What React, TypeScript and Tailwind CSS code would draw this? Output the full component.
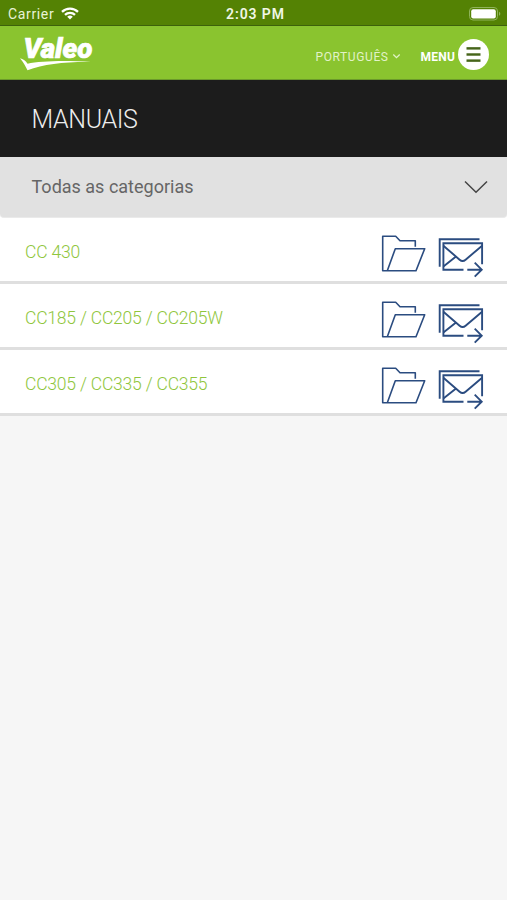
import { Menu } from 'lucide-react';

const manuals = ['CC 430', 'CC185 / CC205 / CC205W', 'CC305 / CC335 / CC355'];

function StatusBar() {
  return (
    <div className="grid h-[26px] grid-cols-3 items-center border-b border-[#3d620b] bg-[#548204] pt-0.5 text-white">
      <div className="flex items-center gap-[7px] pl-2">
        <span className="text-[14px] leading-4 tracking-[0.65px] text-[#e8f3d6]">Carrier</span>
        <svg width="18" height="13" viewBox="0 0 18 13" fill="none" stroke="#fff" strokeWidth="2.3">
          <path d="M1 4.8a11.5 11.5 0 0 1 16 0" />
          <path d="M4 7.9a7.1 7.1 0 0 1 10 0" />
          <path d="M9 12.6 6.2 9.8a4 4 0 0 1 5.6 0Z" fill="#fff" stroke="none" />
        </svg>
      </div>
      <span className="pl-1 text-center text-[14px] leading-4 font-semibold tracking-[0.9px] text-[#f0f7e4]">2:03 PM</span>
      <div className="flex justify-end pr-[6px]">
        <svg width="32" height="14" viewBox="0 0 32 14">
          <rect x="0.5" y="0.5" width="28" height="12.5" rx="3.5" fill="none" stroke="#8fb35a" />
          <rect x="2.2" y="2.2" width="24.6" height="9.2" rx="2" fill="#fff" />
          <path d="M30 4.8v4c1.8-.6 1.8-3.4 0-4Z" fill="#8fb35a" />
        </svg>
      </div>
    </div>
  );
}

function Logo() {
  return (
    <svg className="overflow-visible" width="80" height="36" viewBox="0 0 80 36" fill="#fff">
      <text
        x="3.5"
        y="22.3"
        textLength="69"
        lengthAdjust="spacingAndGlyphs"
        className="font-[Roboto,sans-serif] text-[28px] font-black italic"
        stroke="#fff"
        strokeWidth="0.7"
      >
        Valeo
      </text>
      <path d="M0 22.3c3 .6 5.3 2.2 7.6 5.4C20 25 46 24.300 71 26c-26-.3-47 1.800-63.500 8.300C5.600 30.200 3 26 0 22.300Z" />
    </svg>
  );
}

function Header() {
  return (
    <header className="flex h-[54px] items-center border-b border-[#6b9a2b] bg-[#8ac42f] pt-[3px] pr-[18px] pl-5 text-white">
      <Logo />
      <div className="ml-auto flex items-center">
        <span className="mt-[5px] text-[12px] leading-4 tracking-[0.6px] text-[#e2f2c8]">PORTUGUÊS</span>
        <svg className="mt-[5px] ml-[3px]" width="9" height="7" viewBox="0 0 9 7" fill="none" stroke="#e2f2c8" strokeWidth="1.3">
          <path d="m1.3 1.5 3.2 3.2 3.2-3.2" />
        </svg>
        <span className="mt-[5px] ml-5 text-[12px] leading-4 font-bold tracking-[0.2px]">MENU</span>
        <button className="ml-[3px] flex size-[31px] items-center justify-center rounded-full bg-white text-[#46651a]">
          <Menu className="size-[21px]" strokeWidth={2.8} strokeLinecap="butt" />
        </button>
      </div>
    </header>
  );
}

function FolderIcon() {
  return (
    <svg width="48" height="44" viewBox="0 0 48 44" fill="none" stroke="#2b4c80" strokeWidth="1.6" strokeLinejoin="round">
      <path d="M35.3 12.8V6.7H20l-4.3-4.4h-13v34.4H36l8.7-22H15.3l-8 22" />
    </svg>
  );
}

function MailIcon() {
  return (
    <svg width="48" height="44" viewBox="0 0 48 44" fill="none" stroke="#2b4c80" strokeWidth="1.9">
      <path d="M2.7 32.7V5.3h39.8" />
      <path d="M26.5 35.7H6.4V9.3h38.7v21" />
      <path d="m6.4 11.7 16.2 14q3 2.6 6 0l16.5-14M6.4 32.5l12.3-9.7" />
      <path d="M30.3 35.7h14M37.7 28.7l7 7-7 7" />
    </svg>
  );
}

export default function App() {
  return (
    <div className="min-h-screen bg-[#f6f6f6] font-[Roboto,sans-serif]">
      <StatusBar />
      <Header />

      <div className="flex h-[77px] items-center bg-[#1c1c1c] pt-[3px] pl-[31.5px]">
        <h1 className="text-[25px] leading-8 font-light tracking-[-0.35px] text-[#ededed]">MANUAIS</h1>
      </div>

      <div className="bg-white">
        <div className="flex h-[61px] items-center justify-between rounded-b-[4px] border-b border-[#eaeaea] bg-[#e1e1e1] pr-[18px] pb-px pl-[31.5px]">
          <span className="text-[18px] leading-6 text-[#666]">Todas as categorias</span>
          <svg width="26" height="16" viewBox="0 0 26 16" fill="none" stroke="#444" strokeWidth="1.5">
            <path d="m2 2.5 11 10.7 11-10.7" />
          </svg>
        </div>

        <ul>
          {manuals.map((name) => (
            <li key={name} className="flex h-[66px] items-center justify-between border-b-[3px] border-[#dfdfdf] pr-[22px] pl-[25px]">
              <span className="pt-[5px] text-[17.5px] leading-6 font-light tracking-[-0.2px] text-[#8fc63d]">{name}</span>
              <div className="flex gap-[9px] pt-[13px]">
                <FolderIcon />
                <MailIcon />
              </div>
            </li>
          ))}
        </ul>
      </div>
    </div>
  );
}
